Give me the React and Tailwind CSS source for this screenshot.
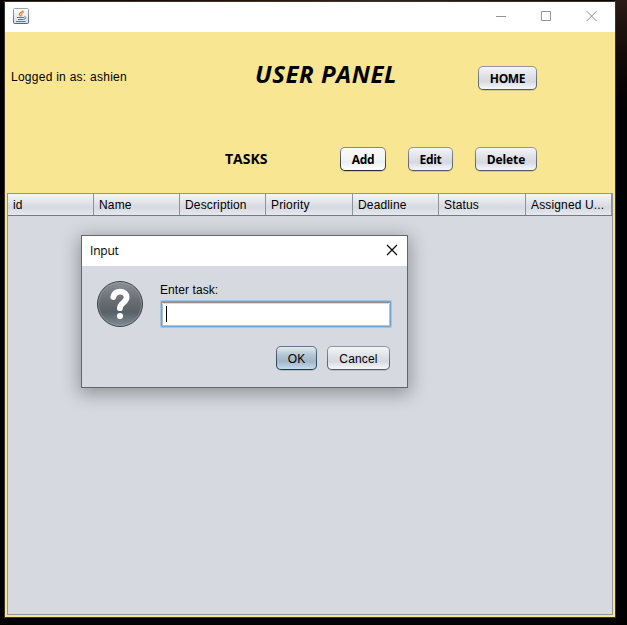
import React from "react";

const arial = "font-['Liberation_Sans',Arial,sans-serif]";
const segoe = "font-['Open_Sans',sans-serif]";

const columns = [
  { label: "id", width: "w-[86px]" },
  { label: "Name", width: "w-[86px]" },
  { label: "Description", width: "w-[86px]" },
  { label: "Priority", width: "w-[87px]" },
  { label: "Deadline", width: "w-[86px]" },
  { label: "Status", width: "w-[87px]" },
  { label: "Assigned U...", width: "w-[86px]" },
];

function Button({ className = "", tone = "normal", children }) {
  const shell =
    tone === "primary"
      ? "bg-linear-to-b from-[#5d7890] to-[#203646]"
      : tone === "light"
        ? "bg-linear-to-b from-[#85888f] to-[#25282f]"
        : "bg-linear-to-b from-[#95979d] to-[#53565e]";
  const face =
    tone === "primary"
      ? "bg-[linear-gradient(#e3ebf1_0%,#b5c6d5_35%,#a1b5c7_65%,#c3dcee_100%)]"
      : tone === "light"
        ? "bg-[linear-gradient(#fbfbfc_0%,#f1f3f6_50%,#eaedf2_62%,#ffffff_100%)]"
        : "bg-[linear-gradient(#f4f5f7_0%,#dfe2e7_40%,#d6d9e0_65%,#f6f8fa_100%)]";
  return (
    <button className={`block h-6 shrink-0 rounded-[5px] p-px shadow-[0_1px_0_rgba(90,90,90,0.22)] ${shell} ${className}`}>
      <span className={`flex h-full w-full items-center justify-center rounded-[4px] pt-[2px] whitespace-nowrap ${face}`}>{children}</span>
    </button>
  );
}

function JavaIcon() {
  return (
    <svg width="16" height="16" viewBox="0 0 16 16" fill="none">
      <defs>
        <linearGradient id="jbg" x1="0" y1="0" x2="0" y2="1">
          <stop offset="0" stopColor="#fbfcfd" />
          <stop offset="1" stopColor="#d4dfe7" />
        </linearGradient>
        <linearGradient id="jedge" x1="0" y1="0" x2="0" y2="1">
          <stop offset="0" stopColor="#9aa8b2" />
          <stop offset="1" stopColor="#486b84" />
        </linearGradient>
      </defs>
      <rect x=".5" y=".5" width="15" height="15" rx="1" fill="url(#jbg)" stroke="url(#jedge)" />
      <path d="M10.3 2.6C9.6 4 6 4.6 6.3 6.3c.2.9 1.2 1.2 1.1 2.1" stroke="#ee7d22" strokeWidth="1.4" />
      <path d="M10.8 4.2C9 4.9 8 5.7 8.6 6.7c.4.7.3 1.1-.3 1.6" stroke="#f09a4c" strokeWidth="1.2" />
      <path d="M4 9.5h7M5 11.5h5.5" stroke="#557c98" strokeWidth="1.2" />
      <path d="M11.3 8.9c2.4-.5 2.3 2-.6 2.4M3 13.5h9.5" stroke="#557c98" />
    </svg>
  );
}

function QuestionIcon() {
  return (
    <svg width="48" height="48" viewBox="0 0 48 48" fill="none">
      <defs>
        <linearGradient id="qbg" x1="0" y1="0" x2="0" y2="1">
          <stop offset="0" stopColor="#8b9096" />
          <stop offset=".45" stopColor="#676c72" />
          <stop offset=".68" stopColor="#596168" />
          <stop offset="1" stopColor="#808d97" />
        </linearGradient>
      </defs>
      <circle cx="24" cy="24" r="22.5" fill="url(#qbg)" stroke="#3c4248" />
      <circle cx="24" cy="24" r="21.4" stroke="#a2a8ae" strokeOpacity=".5" />
      <path d="M17.3 17C18.2 13.5 20.6 11.7 24.1 11.7c3.9 0 6.5 2.1 6.5 5.5 0 5.6-6.7 5.7-6.7 11" stroke="#fff" strokeWidth="5.8" strokeLinecap="round" strokeLinejoin="round" />
      <circle cx="24" cy="36" r="3.1" fill="#fff" />
    </svg>
  );
}

function InputDialog() {
  return (
    <section className="absolute top-[235px] left-[81px] h-[153px] w-[327px] border border-[#63656a] bg-[#d6d9e0] shadow-[0_4px_17px_2px_rgba(0,0,0,0.32)]">
      <header className="flex h-[30px] items-center justify-between bg-white pr-[9px] pb-px pl-2">
        <span className={`${segoe} pt-px text-[12px] leading-4 tracking-[-0.2px]`}>Input</span>
        <svg className="mb-px" width="12" height="12" viewBox="0 0 12 12" fill="none" stroke="#000" strokeWidth="1.1">
          <path d="M1 1l10 10M11 1L1 11" />
        </svg>
      </header>
      <div className="flex pt-[14px] pl-[14px]">
        <QuestionIcon />
        <div className="ml-4 pt-[2px]">
          <label className="block h-[18px] text-[12px] leading-4 tracking-[0.08px]">Enter task:</label>
          <div className="mt-px ml-px flex h-[26px] w-[230px] rounded-[1px] border border-[#73a4d1] bg-white pt-1 pl-1 shadow-[0_0_0_1px_rgba(115,164,209,0.45),inset_0_1px_0_#8d8f94,inset_0_2px_0_#dddddf,inset_1px_0_0_#a9bfd4,inset_-1px_0_0_#b5c0cb,inset_0_-1px_0_#b9c4cf]">
            <span className="h-4 w-px bg-black" />
          </div>
        </div>
      </div>
      <div className="mt-[17px] flex gap-[10px] pl-[194px] text-[12px] leading-4">
        <Button tone="primary" className="mt-px w-[41px]">OK</Button>
        <Button className="mt-px w-[63px]"><span className="tracking-[0.15px]">Cancel</span></Button>
      </div>
    </section>
  );
}

export default function App() {
  return (
    <main className={`relative h-[625px] w-[627px] overflow-hidden bg-[#020101] bg-[linear-gradient(90deg,#090302,#281409_40%,#33231c_60%,#080302)] bg-[length:627px_2px] bg-no-repeat pt-px pl-1 text-black ${arial}`}>
      <div className="absolute top-0 right-0 h-[115px] w-3 bg-linear-to-b from-[#2a1b15] to-[#020101]" />
      <div className="relative flex h-[617px] w-[612px] flex-col border border-[#39342e] bg-[#f8e692]">
        <header className="flex h-[30px] shrink-0 items-center bg-white pr-[2px] pb-[2px] pl-2">
          <JavaIcon />
          <svg className="ml-auto" width="122" height="28" viewBox="0 0 122 28" fill="none" stroke="#949494">
            <path d="M5 14.5h10M50.5 9.5h9v9h-9z" />
            <path d="M95.7 9.2l9.8 9.8M105.5 9.2l-9.8 9.8" stroke="#8c8c8c" />
          </svg>
        </header>
        <div className="flex h-[85px] shrink-0 items-start">
          <p className="w-[250px] pt-[37px] pl-[6px] text-[12px] leading-4 tracking-[0.26px] whitespace-nowrap">Logged in as: ashien</p>
          <h1 className={`w-[223px] pt-[26px] text-[24px] leading-8 font-bold tracking-[0.55px] whitespace-nowrap italic ${segoe}`}>USER PANEL</h1>
          <Button className={`mt-[34px] w-[59px] text-[12px] font-bold tracking-[-0.35px] ${segoe}`}>HOME</Button>
        </div>
        <div className={`flex h-[76px] shrink-0 items-start pt-[30px] pl-[220px] font-bold ${segoe}`}>
          <h2 className="w-[115px] pt-1 text-[14px] leading-4">TASKS</h2>
          <Button tone="light" className="w-[46px] text-[12px] tracking-[-0.3px]">Add</Button>
          <Button className="ml-[22px] w-[45px] text-[12px] tracking-[-0.3px]">Edit</Button>
          <Button className="ml-[22px] w-[62px] text-[12px] tracking-[-0.1px]">Delete</Button>
        </div>
        <div className="ml-[2px] h-[422px] w-[606px] shrink-0 border border-[#92959d] bg-[#d6d9e0]">
          <div className="flex h-[22px] w-[604px] border-b border-[#747982] bg-[linear-gradient(#f4f5f7_0%,#e2e4e8_40%,#d6d9e0_62%,#e5e9ef_100%)] text-[12px] leading-[23px]">
            {columns.map((column) => (
              <div key={column.label} className={`${column.width} h-[21px] shrink-0 border-r border-[#8e929a] pl-[5px] tracking-[0.15px] whitespace-nowrap`}>
                {column.label}
              </div>
            ))}
          </div>
        </div>
      </div>
      <InputDialog />
    </main>
  );
}
